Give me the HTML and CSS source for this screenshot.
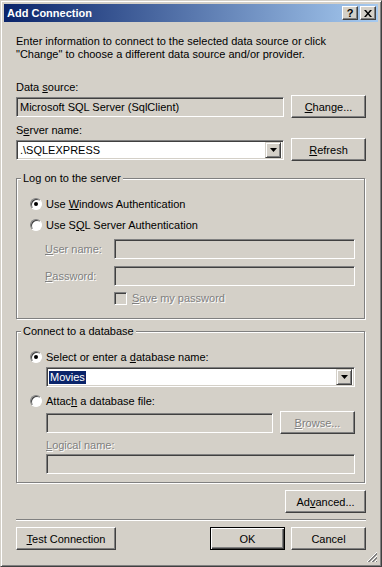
FILE: index.html
```html
<!DOCTYPE html>
<html lang="en">
<head>
  <meta charset="UTF-8">
  <meta name="viewport" content="width=device-width,initial-scale=1.0">
  <title>Add Connection</title>
  <link rel="stylesheet" href="styles.css">
</head>
<body>
  <div class="window">
    <div class="titlebar">
      <span class="title">Add Connection</span>
      <div class="tbtn">?</div>
      <div class="tbtn">
        <svg width="8" height="7" viewBox="0 0 8 7"><path d="M0 0h2l2 2.5L6 0h2L5 3.5 8 7H6L4 4.5 2 7H0l3-3.5z" fill="#000"/></svg>
      </div>
    </div>

    <div class="content">
      <p class="intro">Enter information to connect to the selected data source or click<br>"Change" to choose a different data source and/or provider.</p>

      <div class="label first">Data <u>s</u>ource:</div>
      <div class="row">
        <div class="field off grow">Microsoft SQL Server (SqlClient)</div>
        <div class="btn side"><span><u>C</u>hange...</span></div>
      </div>

      <div class="label second">S<u>e</u>rver name:</div>
      <div class="row">
        <div class="field combo grow">
          <span>.\SQLEXPRESS</span>
          <div class="drop"><svg width="7" height="4" viewBox="0 0 7 4"><path d="M0 0h7L3.5 4z" fill="#000"/></svg></div>
        </div>
        <div class="btn side"><span><u>R</u>efresh</span></div>
      </div>

      <div class="group logon">
        <span class="group-title">Log on to the server</span>
        <div class="group-body">
          <div class="option"><span class="radio on"></span><span>Use <u>W</u>indows Authentication</span></div>
          <div class="option"><span class="radio"></span><span>Use S<u>Q</u>L Server Authentication</span></div>
          <div class="cred">
            <span class="dim cred-label"><u>U</u>ser name:</span>
            <div class="field off grow"></div>
          </div>
          <div class="cred pass">
            <span class="dim cred-label"><u>P</u>assword:</span>
            <div class="field off grow"></div>
          </div>
          <div class="save">
            <span class="check"></span><span class="dim"><u>S</u>ave my password</span>
          </div>
        </div>
      </div>

      <div class="group db">
        <span class="group-title">Connect to a database</span>
        <div class="group-body">
          <div class="option"><span class="radio on"></span><span>Select or enter a <u>d</u>atabase name:</span></div>
          <div class="field combo indent">
            <span class="selected">Movies</span>
            <div class="drop"><svg width="7" height="4" viewBox="0 0 7 4"><path d="M0 0h7L3.5 4z" fill="#000"/></svg></div>
          </div>
          <div class="option attach"><span class="radio"></span><span>Attac<u>h</u> a database file:</span></div>
          <div class="row indent">
            <div class="field off grow"></div>
            <div class="btn side dim"><span><u>B</u>rowse...</span></div>
          </div>
          <div class="label dim indent logical"><u>L</u>ogical name:</div>
          <div class="field off indent logical-field"></div>
        </div>
      </div>

      <div class="advanced-row">
        <div class="btn advanced"><span>Ad<u>v</u>anced...</span></div>
      </div>

      <div class="separator"></div>

      <div class="footer">
        <div class="btn test"><span><u>T</u>est Connection</span></div>
        <div class="spacer"></div>
        <div class="btn default">OK</div>
        <div class="btn side">Cancel</div>
      </div>

      <svg class="grip" width="12" height="12" viewBox="0 0 12 12">
        <path d="M11 1L1 11M11 5L5 11M11 9L9 11" stroke="#fff" stroke-width="1"/>
        <path d="M11 2L2 11M11 3L3 11M11 6L6 11M11 7L7 11M11 10L10 11" stroke="#808080" stroke-width="1"/>
      </svg>
    </div>
  </div>
</body>
</html>
```

FILE: styles.css
```css
body {
  margin: 0;
  background: #d4d0c8;
  font-family: "Liberation Sans", Arial, sans-serif;
  font-size: 11px;
  color: #000;
}
u {
  text-decoration: underline;
  text-underline-offset: 1px;
}
.window {
  width: 382px;
  height: 567px;
  box-sizing: border-box;
  border: 1px solid;
  border-color: #d4d0c8 #404040 #404040 #d4d0c8;
  box-shadow: inset 1px 1px #fff, inset -1px -1px #808080;
  padding: 3px;
  display: flex;
  flex-direction: column;
}
.titlebar {
  height: 18px;
  flex-shrink: 0;
  background: linear-gradient(to right, #0a246a, #a6caf0);
  display: flex;
  align-items: center;
  gap: 2px;
  padding: 0 2px 0 3px;
}
.title {
  flex: 1;
  color: #fff;
  font-weight: bold;
  font-size: 11px;
}
.tbtn {
  width: 16px;
  height: 14px;
  box-sizing: border-box;
  background: #d4d0c8;
  border: 1px solid;
  border-color: #fff #404040 #404040 #fff;
  box-shadow: inset -1px -1px #808080;
  display: flex;
  align-items: center;
  justify-content: center;
  font-weight: bold;
  font-size: 11px;
  line-height: 12px;
}
.content {
  flex: 1;
  position: relative;
  padding: 13px 12px 0 12px;
  display: flex;
  flex-direction: column;
}
.intro {
  margin: 0;
  line-height: 13px;
}
.label {
  line-height: 13px;
}
.label.first { margin-top: 20px; }
.label.second { margin-top: 6px; }
.row {
  display: flex;
  align-items: center;
  gap: 7px;
  height: 23px;
  margin-top: 1px;
}
.grow { flex: 1; }
.field {
  height: 20px;
  box-sizing: border-box;
  border: 1px solid;
  border-color: #808080 #fff #fff #808080;
  box-shadow: inset 1px 1px #404040, inset -1px -1px #d4d0c8;
  background: #fff;
  padding: 0 3px;
  display: flex;
  align-items: center;
  white-space: nowrap;
}
.field.off { background: #d4d0c8; }
.combo {
  padding-right: 2px;
  justify-content: space-between;
}
.drop {
  width: 16px;
  height: 16px;
  box-sizing: border-box;
  background: #d4d0c8;
  border: 1px solid;
  border-color: #d4d0c8 #404040 #404040 #d4d0c8;
  box-shadow: inset 1px 1px #fff, inset -1px -1px #808080;
  display: flex;
  align-items: center;
  justify-content: center;
}
.btn {
  height: 23px;
  box-sizing: border-box;
  background: #d4d0c8;
  border: 1px solid;
  border-color: #fff #404040 #404040 #fff;
  box-shadow: inset -1px -1px #808080;
  display: flex;
  align-items: center;
  justify-content: center;
  white-space: nowrap;
}
.btn.side { width: 75px; flex-shrink: 0; }
.btn.default {
  width: 75px;
  border-color: #000;
  box-shadow: inset 1px 1px #fff, inset -1px -1px #404040, inset -2px -2px #808080;
}
.dim {
  color: #808080;
  text-shadow: 1px 1px #fff;
}
.group {
  margin-right: 1px;
  border: 1px solid #808080;
  box-shadow: inset 1px 1px #fff, 1px 1px #fff;
  display: flex;
  flex-direction: column;
}
.group-title {
  align-self: flex-start;
  margin: -7px 0 0 4px;
  padding: 0 2px;
  line-height: 13px;
  background: #d4d0c8;
}
.logon { margin-top: 17px; }
.db { margin-top: 12px; }
.group-body {
  display: flex;
  flex-direction: column;
  padding: 0 9px 0 13px;
}
.logon .group-body { padding-top: 8px; padding-bottom: 10px; }
.db .group-body { padding-top: 9px; padding-bottom: 8px; }
.option {
  display: flex;
  align-items: center;
  height: 21px;
}
.db .option { height: 20px; }
.db .option.attach { margin-top: 4px; }
.radio {
  width: 12px;
  height: 12px;
  box-sizing: border-box;
  border-radius: 50%;
  border: 1px solid;
  border-color: #808080 #fff #fff #808080;
  box-shadow: inset 1px 1px #404040;
  background: #fff;
  margin-right: 4px;
  flex-shrink: 0;
  display: flex;
  align-items: center;
  justify-content: center;
}
.radio.on::after {
  content: "";
  width: 4px;
  height: 4px;
  border-radius: 50%;
  background: #000;
}
.cred {
  display: flex;
  align-items: center;
  height: 20px;
  margin-top: 4px;
  padding-left: 15px;
}
.cred.pass { margin-top: 7px; }
.cred-label { width: 69px; }
.save {
  display: flex;
  align-items: center;
  height: 20px;
  margin-top: 2px;
  padding-left: 84px;
}
.check {
  width: 13px;
  height: 13px;
  box-sizing: border-box;
  border: 1px solid;
  border-color: #808080 #fff #fff #808080;
  box-shadow: inset 1px 1px #404040, inset -1px -1px #d4d0c8;
  background: #d4d0c8;
  margin-right: 5px;
}
.indent { margin-left: 16px; }
.db .row.indent { margin-top: 0; }
.selected {
  background: #0a246a;
  color: #fff;
  padding: 0 1px;
  margin-left: -1px;
  line-height: 13px;
}
.logical { margin-top: 5px; }
.logical-field { margin-top: 2px; }
.advanced-row {
  display: flex;
  justify-content: flex-end;
  margin-top: 7px;
}
.btn.advanced { width: 81px; }
.separator {
  height: 1px;
  background: #808080;
  border-bottom: 1px solid #fff;
  margin-top: 6px;
}
.footer {
  display: flex;
  gap: 6px;
  margin-top: 6px;
}
.btn.test { width: 100px; }
.spacer { flex: 1; }
.grip {
  position: absolute;
  right: 0;
  bottom: 0;
}
```
